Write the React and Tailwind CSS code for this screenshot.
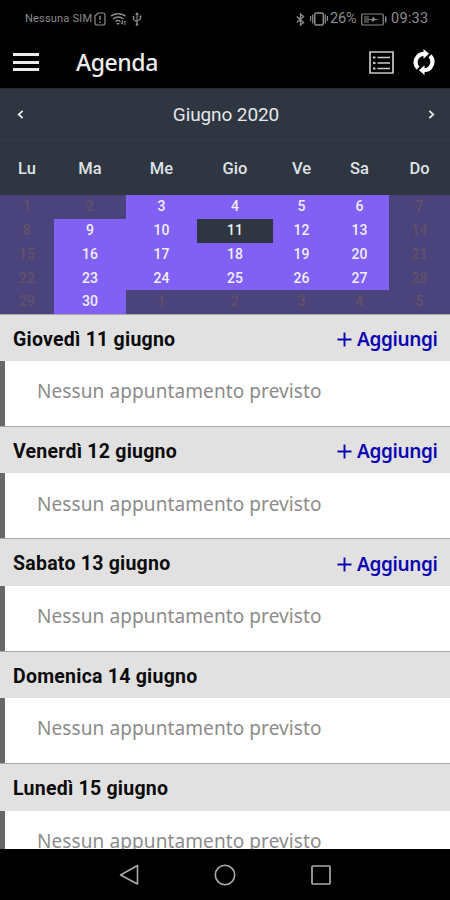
import React from "react";

const WEEKDAYS = ["Lu", "Ma", "Me", "Gio", "Ve", "Sa", "Do"];

const WEEKS = [
  [1, 2, 3, 4, 5, 6, 7],
  [8, 9, 10, 11, 12, 13, 14],
  [15, 16, 17, 18, 19, 20, 21],
  [22, 23, 24, 25, 26, 27, 28],
  [29, 30, 1, 2, 3, 4, 5],
];

// Column range (inclusive) of the bookable days in each week
const OPEN = [[2, 5], [1, 5], [1, 5], [1, 5], [1, 1]];

const DAYS = [
  { label: "Giovedì 11 giugno", add: true },
  { label: "Venerdì 12 giugno", add: true },
  { label: "Sabato 13 giugno", add: true },
  { label: "Domenica 14 giugno", add: false },
  { label: "Lunedì 15 giugno", add: false },
];

const COLUMNS = "grid grid-cols-[54px_72px_71px_76px_57px_59px_61px]";

function StatusBar() {
  return (
    <div className="flex h-9 shrink-0 items-center pt-[2px] text-[#8c8c8c]">
      <span className="ml-[25px] w-[68px] whitespace-nowrap text-[11px] tracking-[0.2px]">Nessuna SIM</span>
      <svg className="ml-px h-[14px] w-3" viewBox="0 0 12 14" fill="none" stroke="currentColor">
        <path d="M1 4 4 1h5q2 0 2 2v8q0 2-2 2H3q-2 0-2-2z" strokeWidth="1.2" />
        <path d="M6 4v4M6 9.5V11" strokeWidth="1.4" />
      </svg>
      <svg className="ml-1 h-4 w-[17px]" viewBox="0 0 17 16" fill="none" stroke="currentColor" strokeWidth="1.5">
        <path d="M1 5Q8 .5 15.500 5M3 8q5-4 10.500 0M5.500 10.500q2.500-2 5 0" />
        <path d="m6 12 2 2 2-2z" fill="currentColor" stroke="none" />
        <path d="M12.300 9v4m-1.500-1.500 1.500 2M15 14v-4m-1.500 1.500L15 9.500" strokeWidth="1" />
      </svg>
      <svg className="ml-[5px] h-[14px] w-[10px]" viewBox="0 0 10 14" fill="none" stroke="currentColor">
        <path d="M5 2v10M1.500 5v2.500L5 10M8.500 4v3L5 9" strokeWidth="1.100" />
        <path d="m5 0 2 3H3z" fill="currentColor" stroke="none" />
        <circle cx="5" cy="12.500" r="1.300" fill="currentColor" stroke="none" />
        <circle cx="1.500" cy="5" r="1" fill="currentColor" stroke="none" />
        <path d="M7.500 3.500h2v2h-2z" fill="currentColor" stroke="none" />
      </svg>
      <svg className="ml-[154px] h-[13px] w-[9px]" viewBox="0 0 9 13" fill="none" stroke="currentColor" strokeWidth="1.400">
        <path d="m.8 3.500 6.700 6-3 2.500V1l3 2.500-6.700 6" />
      </svg>
      <svg className="ml-[5px] h-[14px] w-[18px]" viewBox="0 0 18 14" fill="none" stroke="currentColor">
        <rect x="4.700" y="1" width="8.600" height="12" rx="1.500" strokeWidth="1.500" />
        <path d="M2.700 2.500v9M15.300 2.500v9M.6 4v5M17.400 4v5" strokeWidth="1.200" />
      </svg>
      <span className="ml-[2px] w-[28px] whitespace-nowrap text-[14.500px] tracking-[-0.1px]">26%</span>
      <svg className="ml-[3px] h-[13px] w-[26px]" viewBox="0 0 26 13" fill="none" stroke="currentColor">
        <rect x=".7" y="1" width="21.500" height="11" rx="1" strokeWidth="1.200" />
        <path d="M3 3h5v7H3z" fill="#444" stroke="none" />
        <path d="M6 6.500 11 6l1.500-2.500L14 6l4 .500-5 1-1 2-1-2z" fill="currentColor" stroke="none" />
        <path d="M24.700 3.500v6" strokeWidth="1.500" />
      </svg>
      <span className="ml-[4px] whitespace-nowrap text-[14.500px] tracking-[0.25px]">09:33</span>
    </div>
  );
}

function AppBar() {
  return (
    <div className="flex h-[52px] shrink-0 items-center text-[#eee]">
      <div className="ml-[13px] flex w-[26px] flex-col gap-[4.500px]">
        <span className="h-[3px] bg-current" />
        <span className="h-[3px] bg-current" />
        <span className="h-[3px] bg-current" />
      </div>
      <h1 className="ml-[37px] font-['Noto_Sans',sans-serif] text-[23px] font-medium leading-none tracking-[-0.4px]">
        Agenda
      </h1>
      <svg className="ml-auto h-[23px] w-[25px]" viewBox="0 0 25 23" fill="none" stroke="#c9c9c9">
        <path d="M1 1h23v21H1z" strokeWidth="1.700" />
        <path d="M8.500 6.500H21M8.500 12H21M8.500 17.500H21" strokeWidth="1.700" />
        <path d="M4 6.500h2.500M4 12h2.500M4 17.500h2.500" strokeWidth="2" />
      </svg>
      <svg className="ml-[19px] mr-[15px] h-[26px] w-[22px]" viewBox="0 0 22 26" fill="none" stroke="#fff" strokeWidth="4.200">
        <path d="M5 19.200A8.500 8.500 0 0 1 11 4.800M17 6.800A8.500 8.500 0 0 1 11 21.200" />
        <path d="m10.500 0 5.500 4.800-5.500 5zM11.500 26 6 21.200l5.500-5z" fill="#fff" stroke="none" />
      </svg>
    </div>
  );
}

function Chevron({ flip }) {
  return (
    <svg className={`h-[9px] w-[7px] ${flip ? "rotate-180" : ""}`} viewBox="0 0 7 9" fill="none" stroke="#e8eaed" strokeWidth="1.800">
      <path d="M5.700.8 1.700 4.500l4 3.700" />
    </svg>
  );
}

function dayStyle(week, column) {
  if (week === 1 && column === 3) return "bg-[#2f3641] text-[#edf0f3]";
  if (column >= OPEN[week][0] && column <= OPEN[week][1]) return "bg-[#8061f3] text-[#f1eeff]";
  return "bg-[#4b437c] text-[#625269]";
}

function Calendar() {
  return (
    <section className="shrink-0">
      <div className="flex h-[52px] items-center justify-between border-b border-t border-b-[#353b46] border-t-[#252b34] bg-[#2f3641] pl-[17px] pr-[15px]">
        <Chevron />
        <span className="pt-[2px] text-[19px] tracking-[-0.1px] text-[#e4e7ea]">Giugno 2020</span>
        <Chevron flip />
      </div>
      <div className={`${COLUMNS} h-[55px] items-center bg-[#2f3641] pt-[3px] text-center text-[16.500px] font-medium text-[#dfe2e6]`}>
        {WEEKDAYS.map((name) => (
          <span key={name}>{name}</span>
        ))}
      </div>
      <div className={`${COLUMNS} h-[119px] grid-rows-[24px_24px_24px_23px_24px] text-center text-[14px] font-medium leading-[23px]`}>
        {WEEKS.map((week, row) =>
          week.map((day, column) => (
            <span key={`${row}-${column}`} className={dayStyle(row, column)}>
              {day}
            </span>
          ))
        )}
      </div>
    </section>
  );
}

function DaySection({ label, add }) {
  return (
    <section className="h-[112.400px] shrink-0">
      <header className="flex h-[47.500px] items-center justify-between border-t border-[#a6a6a6] bg-[#e1e1e1] pl-[13px] pr-3 pt-[3px]">
        <h2 className="text-[19.500px] font-bold tracking-[0.240px] text-[#0b0b0b]">{label}</h2>
        {add && (
          <button className="flex items-center gap-[5px] text-[#0c05b1]">
            <svg className="h-[15px] w-[15px]" viewBox="0 0 15 15" stroke="currentColor" strokeWidth="1.900">
              <path d="M7.500.5v14M.5 7.500h14" />
            </svg>
            <span className="w-[81px] whitespace-nowrap text-left font-['Noto_Sans',sans-serif] text-[19px] font-semibold tracking-[-0.35px]">
              Aggiungi
            </span>
          </button>
        )}
      </header>
      <div className="flex h-[64.900px] items-center border-l-[5.500px] border-[#686868] bg-white pl-8">
        <p className="whitespace-nowrap pb-[4px] font-['Noto_Sans',sans-serif] text-[19px] tracking-[0.1px] text-[#8b8b8b]">
          Nessun appuntamento previsto
        </p>
      </div>
    </section>
  );
}

function NavigationBar() {
  return (
    <nav className="flex h-[51px] shrink-0 items-center justify-center gap-[75px] bg-black">
      <svg className="h-[22px] w-[20px]" viewBox="0 0 20 22" fill="none" stroke="#aaa" strokeWidth="1.600" strokeLinejoin="round">
        <path d="M18.500 1.500v18.500L1.500 11z" />
      </svg>
      <svg className="h-[22px] w-[22px]" viewBox="0 0 22 22" fill="none" stroke="#aaa" strokeWidth="1.600">
        <circle cx="11" cy="11" r="9.700" />
      </svg>
      <svg className="h-[20px] w-[20px]" viewBox="0 0 20 20" fill="none" stroke="#aaa" strokeWidth="1.700">
        <rect x="1" y="1" width="18" height="18" rx="1" />
      </svg>
    </nav>
  );
}

export default function App() {
  return (
    <div className="flex h-[900px] w-[450px] flex-col overflow-hidden bg-black font-['Roboto',sans-serif]">
      <StatusBar />
      <AppBar />
      <Calendar />
      <main className="-mt-[0.5px] flex min-h-0 flex-1 flex-col overflow-hidden bg-white">
        {DAYS.map((day) => (
          <DaySection key={day.label} label={day.label} add={day.add} />
        ))}
      </main>
      <NavigationBar />
    </div>
  );
}
